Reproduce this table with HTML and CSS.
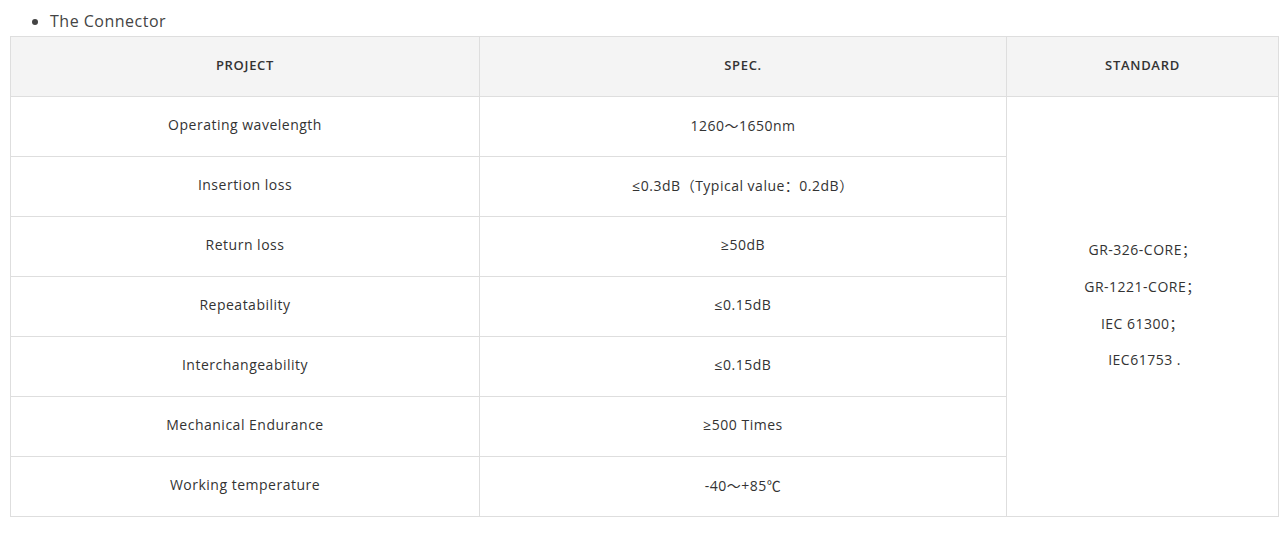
FILE: index.html
```html
<!DOCTYPE html>
<html>
<head>
<meta charset="utf-8">
<link rel="stylesheet" href="styles.css">
</head>
<body>
<div class="page">
  <ul class="list">
    <li>The Connector</li>
  </ul>
  <table class="spec">
    <colgroup>
      <col class="c1"><col class="c2"><col class="c3">
    </colgroup>
    <thead>
      <tr><th>PROJECT</th><th>SPEC.</th><th>STANDARD</th></tr>
    </thead>
    <tbody>
      <tr><td>Operating wavelength</td><td>1260～1650nm</td>
        <td rowspan="7" class="std">
          <p>GR-326-CORE；</p>
          <p>GR-1221-CORE；</p>
          <p>IEC 61300；</p>
          <p>&nbsp;IEC61753 .</p>
        </td></tr>
      <tr><td>Insertion loss</td><td>≤0.3dB（Typical value：0.2dB）</td></tr>
      <tr><td>Return loss</td><td>≥50dB</td></tr>
      <tr><td>Repeatability</td><td>≤0.15dB</td></tr>
      <tr><td>Interchangeability</td><td>≤0.15dB</td></tr>
      <tr><td>Mechanical Endurance</td><td>≥500 Times</td></tr>
      <tr><td>Working temperature</td><td>-40～+85℃</td></tr>
    </tbody>
  </table>
</div>
</body>
</html>
```

FILE: styles.css
```css
html, body { margin: 0; padding: 0; background: #fff; }
body { font-family: "Open Sans", "Noto Sans CJK SC", sans-serif; color: #333; letter-spacing: 0.5px; }
.page { padding: 7px 9px 0 10px; }
.list { margin: 0; padding: 0 0 0 40px; }
.list li { font-size: 16px; line-height: 28px; padding-bottom: 1px; color: #444; }
.spec { width: 1268px; border-collapse: collapse; table-layout: fixed; }
.c1 { width: 469px; }
.c2 { width: 527px; }
.c3 { width: 272px; }
.spec th, .spec td { border: 1px solid #dedede; text-align: center; padding: 0; font-size: 14px; }
.spec th { height: 56px; padding-bottom: 3px; background: #f4f4f4; font-weight: 600; font-size: 13px; letter-spacing: 0.7px; color: #333; }
.spec td { height: 55px; padding-bottom: 4px; color: #333; }
.spec td.std { padding: 0 0 2px; }
.std p { margin: 0; line-height: 36.7px; }
```
